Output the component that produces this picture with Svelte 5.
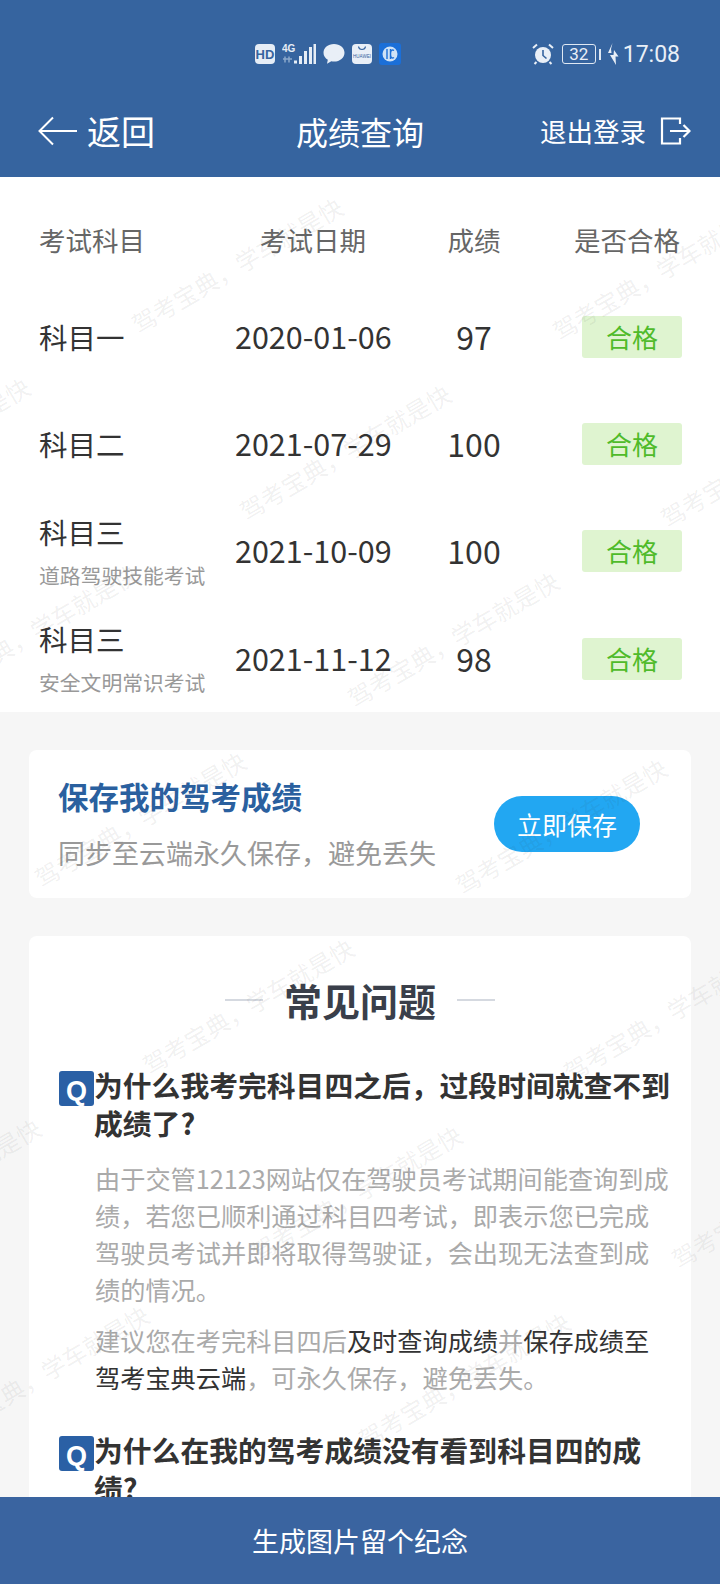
<script lang="ts">
  type Row = { name: string; sub?: string; date: string; score: number }

  const rows: Row[] = [
    { name: '科目一', date: '2020-01-06', score: 97 },
    { name: '科目二', date: '2021-07-29', score: 100 },
    { name: '科目三', sub: '道路驾驶技能考试', date: '2021-10-09', score: 100 },
    { name: '科目三', sub: '安全文明常识考试', date: '2021-11-12', score: 98 }
  ]

  // watermark repeats on a skewed lattice, offsets relative to the scroll area
  const marks: { x: number; y: number }[] = []
  for (let j = -2; j < 7; j++) {
    for (let i = -2; i < 3; i++) {
      const x = 237 + i * 421 + j * 108
      const y = 265 + i * 7 + j * 187 - 177
      if (x > -180 && x < 900 && y > -100 && y < 1420) marks.push({ x, y })
    }
  }
</script>

<div class="page">
  <header class="top">
    <div class="status">
      <div class="status-left">
        <svg width="20" height="20" viewBox="0 0 20 20">
          <rect width="20" height="20" rx="4" fill="#e6edf6" />
          <text x="10" y="15" text-anchor="middle" class="hd">HD</text>
        </svg>
        <svg width="34" height="22" viewBox="0 0 34 22">
          <text x="0" y="9" class="net">4G</text>
          <path d="M1 16h9M7 13.500v6M3 13.500v6" stroke="#8ba8cc" stroke-width="1.500" fill="none" />
          <path d="M12 17.500h3v3h-3zM17 13h3v8h-3zM22 8h3v13h-3zM27 4h3v17h-3zM31.500 1h2.500v20h-2.500z" fill="#e6edf6" />
        </svg>
        <svg width="22" height="22" viewBox="0 0 22 22">
          <path d="M11 1C5 1 .5 4.800.5 9.700c0 3 1.700 5.400 4.300 7l-.8 4 4.300-2.500c.9.200 1.800.3 2.700.3 6 0 10.500-3.800 10.500-8.800S17 1 11 1z" fill="#e9eff7" />
        </svg>
        <svg width="20" height="20" viewBox="0 0 20 20">
          <rect width="20" height="20" rx="4" fill="#e9eff7" />
          <path d="M6.500 2.500c.5 4 6.500 4 7 0" stroke="#36649f" stroke-width="1.200" fill="none" />
          <text x="10" y="13.500" text-anchor="middle" class="hw">HUAWEI</text>
        </svg>
        <svg width="22" height="22" viewBox="0 0 22 22">
          <rect width="22" height="22" rx="3" fill="#1b6fd8" />
          <circle cx="11" cy="11" r="7.500" fill="#cfe2f6" />
          <path d="M8 6v10M11.500 6v10M15 7.500c-2-1.500-3.500 0-3.500 3.500s1.500 5 3.500 3.500" stroke="#1b6fd8" stroke-width="1.400" fill="none" />
        </svg>
      </div>
      <div class="status-right">
        <svg width="22" height="22" viewBox="0 0 22 22">
          <circle cx="11" cy="12" r="8" fill="#e9eff7" />
          <path d="M11 7v5.500l3.500 3" stroke="#36649f" stroke-width="1.600" fill="none" />
          <path d="M1 5l4-3.500M21 5l-4-3.500M4.500 19l-2 2M17.500 19l2 2" stroke="#e9eff7" stroke-width="2" fill="none" />
        </svg>
        <div class="battery"><span>32</span></div>
        <i class="nub"></i>
        <svg class="bolt" width="12" height="22" viewBox="0 0 12 22">
          <path d="M5.500 0L1 10h3.500L4 6zM7 7l4.500 6.500H8.500L9 22 3 12h3.500z" fill="#e9eff7" />
        </svg>
        <span class="clock">17:08</span>
      </div>
    </div>
    <nav class="bar">
      <div class="back">
        <svg width="40" height="30" viewBox="0 0 40 30">
          <path d="M15 1.500L1.500 15 15 28.500M1.500 15H39" stroke="#fff" stroke-width="2" fill="none" />
        </svg>
        <span>返回</span>
      </div>
      <h1>成绩查询</h1>
      <div class="logout">
        <span>退出登录</span>
        <svg width="31" height="28" viewBox="0 0 31 28">
          <path d="M20 7V1.500H2v25h18V21M10 14h19.500M23.500 8l6 6-6 6" stroke="#fff" stroke-width="2.200" fill="none" />
        </svg>
      </div>
    </nav>
  </header>

  <main class="body">
    <section class="table">
      <div class="row head">
        <span>考试科目</span>
        <span class="mid">考试日期</span>
        <span class="mid">成绩</span>
        <span class="end">是否合格</span>
      </div>
      {#each rows as row}
        <div class="row">
          <div>
            <div class="name">{row.name}</div>
            {#if row.sub}<div class="sub">{row.sub}</div>{/if}
          </div>
          <span class="mid date">{row.date}</span>
          <span class="mid score">{row.score}</span>
          <span class="badge">合格</span>
        </div>
      {/each}
    </section>

    <section class="card save">
      <div>
        <h2>保存我的驾考成绩</h2>
        <p>同步至云端永久保存，避免丢失</p>
      </div>
      <button>立即保存</button>
    </section>

    <section class="card faq">
      <div class="faq-title"><i></i><h2>常见问题</h2><i></i></div>

      <div class="q"><b>Q</b><h3>为什么我考完科目四之后，过段时间就查不到成绩了?</h3></div>
      <p class="a">由于交管12123网站仅在驾驶员考试期间能查询到成绩，若您已顺利通过科目四考试，即表示您已完成驾驶员考试并即将取得驾驶证，会出现无法查到成绩的情况。</p>
      <p class="a second">建议您在考完科目四后<em>及时查询成绩</em>并<em>保存成绩至驾考宝典云端</em>，可永久保存，避免丢失。</p>

      <div class="q next"><b>Q</b><h3>为什么在我的驾考成绩没有看到科目四的成绩?</h3></div>
    </section>

    <div class="marks" aria-hidden="true">
      {#each marks as m}
        <span style="left: {m.x}px; top: {m.y}px">驾考宝典，学车就是快</span>
      {/each}
    </div>
  </main>

  <footer class="foot">生成图片留个纪念</footer>
</div>

<style>
  :global(body) {
    background: #f6f6f6;
  }
  .page {
    display: flex;
    flex-direction: column;
    height: 1584px;
    overflow: hidden;
    font-family: "Noto Sans CJK SC", "Noto Sans", sans-serif;
    color: #333;
  }

  .top {
    flex: none;
    height: 177px;
    background: #36649f;
    color: #fff;
  }
  .status {
    display: flex;
    justify-content: space-between;
    align-items: center;
    height: 22px;
    padding: 43px 40px 0 255px;
    color: #e9eff7;
  }
  .status-left, .status-right {
    display: flex;
    align-items: center;
  }
  .status-left { gap: 7px; }
  .hd {
    font: bold 13px "Liberation Sans", sans-serif;
    fill: #36649f;
  }
  .net {
    font: bold 10px "Liberation Sans", sans-serif;
    fill: #e6edf6;
  }
  .hw {
    font: 4.500px "Liberation Sans", sans-serif;
    fill: #36649f;
  }
  .battery {
    width: 34px;
    height: 20px;
    margin-left: 8px;
    box-sizing: border-box;
    border: 1.500px solid #dfe8f3;
    border-radius: 3px;
    display: flex;
    align-items: center;
    justify-content: center;
    font: 17px/1 "Roboto", sans-serif;
  }
  .nub {
    width: 2px;
    height: 11px;
    margin-left: 3px;
    background: #dfe8f3;
  }
  .bolt { margin-left: 6px; }
  .clock {
    margin-left: 4px;
    font: 23px/1 "Roboto", sans-serif;
  }

  .bar {
    display: grid;
    grid-template-columns: 258px 128px 1fr;
    align-items: center;
    height: 44px;
    margin-top: 44px;
    padding: 0 29px 0 38px;
  }
  .back {
    display: flex;
    align-items: center;
    gap: 9px;
    font-size: 34px;
    line-height: 44px;
  }
  .bar h1 {
    margin: 0;
    font-size: 32px;
    font-weight: 400;
    line-height: 44px;
  }
  .logout {
    display: flex;
    justify-content: flex-end;
    align-items: center;
    gap: 14px;
    font-size: 26.500px;
    line-height: 44px;
  }

  .body {
    position: relative;
    flex: 1;
    min-height: 0;
    overflow: hidden;
  }

  .table {
    background: #fff;
  }
  .row {
    display: grid;
    grid-template-columns: 196px 156px 166px 125px;
    align-items: center;
    height: 107.200px;
    padding: 0 38px 0 39px;
    box-sizing: border-box;
  }
  .row.head {
    height: 106.500px;
    padding-top: 18px;
    font-size: 26.500px;
    color: #666;
  }
  .mid { text-align: center; white-space: nowrap; }
  .end { text-align: right; margin-right: 2px; white-space: nowrap; }
  .name {
    font-size: 28.500px;
    line-height: 40px;
    color: #333;
    margin-top: -1px;
  }
  .sub {
    margin-top: 8px;
    font-size: 20.800px;
    line-height: 30px;
    color: #999;
    white-space: nowrap;
  }
  .date { font-size: 30.500px; line-height: 40px; margin-top: -2px; }
  .score { font-size: 32px; line-height: 40px; margin-top: -2px; }
  .badge {
    justify-self: end;
    width: 100px;
    height: 42px;
    border-radius: 3px;
    background: #dff4d0;
    color: #4fbb2a;
    font-size: 26px;
    line-height: 42px;
    text-align: center;
  }

  .card {
    margin: 0 29px;
    background: #fff;
    border-radius: 8px;
  }
  .save {
    display: flex;
    justify-content: space-between;
    align-items: center;
    margin-top: 38px;
    height: 148px;
    padding: 0 51px 0 29px;
    box-sizing: border-box;
  }
  .save h2 {
    margin: 0;
    font-size: 30.500px;
    font-weight: 700;
    line-height: 40px;
    color: #2a609f;
  }
  .save p {
    margin: 17px 0 0;
    font-size: 27px;
    line-height: 40px;
    color: #999;
    white-space: nowrap;
  }
  .save button {
    width: 146px;
    height: 56px;
    padding: 0;
    border: 0;
    border-radius: 28px;
    background: #22a7f2;
    color: #fff;
    font: inherit;
    font-size: 25px;
  }

  .faq {
    margin-top: 38px;
    height: 700px;
    padding: 42px 20px 0 30px;
    box-sizing: border-box;
  }
  .faq-title {
    display: flex;
    justify-content: center;
    align-items: center;
    gap: 21px;
    height: 44px;
    margin-left: -10px;
  }
  .faq-title h2 {
    margin: 0;
    font-size: 38px;
    font-weight: 700;
    line-height: 44px;
    color: #3a3f4a;
  }
  .faq-title i {
    width: 38px;
    height: 2px;
    background: #d5d9e0;
  }
  .q {
    display: flex;
    align-items: flex-start;
    margin-top: 49px;
  }
  .q.next { margin-top: 40px; }
  .q b {
    flex: none;
    width: 35px;
    height: 35px;
    border-radius: 3px;
    background: #2a60a5;
    color: #fff;
    font: bold 27px/40px "Liberation Sans", sans-serif;
    text-align: center;
    overflow: hidden;
  }
  .q h3 {
    margin: -5px 0 0;
    font-size: 28.800px;
    font-weight: 700;
    line-height: 38px;
    color: #333;
  }
  .a {
    margin: 18px 0 0 36px;
    font-size: 25.200px;
    line-height: 37px;
    color: #aaa;
  }
  .a.second { margin-top: 14px; }
  .a em {
    font-style: normal;
    color: #333;
  }

  .marks {
    position: absolute;
    inset: 0;
    pointer-events: none;
  }
  .marks span {
    position: absolute;
    transform: translate(-50%, -50%) rotate(-30.500deg);
    font-size: 24px;
    line-height: 30px;
    white-space: nowrap;
    color: rgba(60, 60, 60, 0.08);
  }

  .foot {
    flex: none;
    height: 87px;
    background: #3a64a0;
    color: #fff;
    font-size: 27px;
    line-height: 87px;
    text-align: center;
  }
</style>
